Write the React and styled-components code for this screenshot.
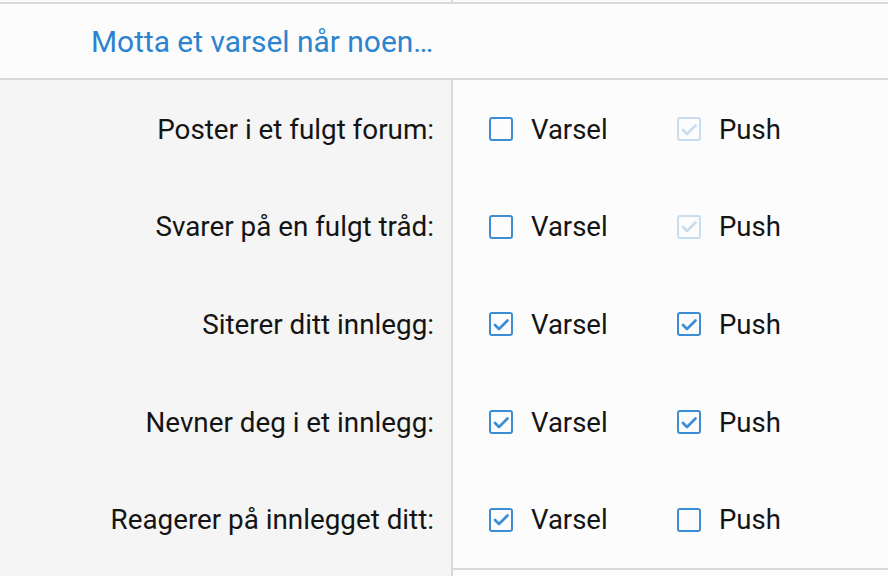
import React from "react";
import styled, { createGlobalStyle } from "styled-components";

const Global = createGlobalStyle`
  html, body { margin: 0; padding: 0; background: #fcfcfc; }
  body { font-family: Roboto, "Liberation Sans", Arial, sans-serif; color: #141414; }
`;

const Page = styled.div`
  width: 888px;
  height: 576px;
  overflow: hidden;
  background: #fcfcfc;
  display: flex;
  flex-direction: column;
`;

const PrevRow = styled.div`
  display: grid;
  grid-template-columns: 453px 1fr;
  height: 2px;
  border-bottom: 2px solid #d9d9d9;
`;

const PrevCell = styled.div`
  border-right: ${(p) => (p.$left ? "2px solid #d9d9d9" : "none")};
`;

const Header = styled.div`
  height: 74px;
  display: flex;
  align-items: center;
  padding-left: 91px;
  border-bottom: 2px solid #d9d9d9;
  color: #2c84cf;
  font-size: 29.9px;
`;

const Body = styled.div`
  display: grid;
  grid-template-columns: 453px 1fr;
  flex: 1;
`;

const LabelCol = styled.div`
  background: #f5f5f5;
  border-right: 2px solid #d9d9d9;
  display: flex;
  flex-direction: column;
`;

const ControlCol = styled.div`
  display: flex;
  flex-direction: column;
`;

const Rows = styled.div`
  height: 488px;
  display: flex;
  flex-direction: column;
  border-bottom: ${(p) => (p.$bordered ? "2px solid #d9d9d9" : "none")};
`;

const LabelRow = styled.div`
  flex: 1;
  display: flex;
  align-items: center;
  justify-content: flex-end;
  padding-right: 17px;
  padding-top: 1px;
  font-size: 27.8px;
`;

const ControlRow = styled.div`
  flex: 1;
  display: flex;
  align-items: center;
  padding-left: 36px;
  padding-top: 1px;
`;

const Option = styled.label`
  display: flex;
  align-items: center;
  gap: 18px;
  width: 188px;
  font-size: 27.5px;
`;

const Box = styled.span`
  box-sizing: border-box;
  width: 24px;
  height: 24px;
  border: 2.5px solid ${(p) => (p.$disabled ? "#c9ddf0" : "#3d8dd5")};
  border-radius: 3px;
  display: flex;
  align-items: center;
  justify-content: center;
  background: #fcfcfc;
`;

function Check({ checked, disabled }) {
  return (
    <Box $disabled={disabled}>
      {checked && (
        <svg width="19" height="19" viewBox="0 0 19 19">
          <polyline
            points="3,10 7,14 15.5,5.5"
            fill="none"
            stroke={disabled ? "#c9ddf0" : "#3d8dd5"}
            strokeWidth="2.7"
            strokeLinecap="round"
            strokeLinejoin="round"
          />
        </svg>
      )}
    </Box>
  );
}

const rows = [
  { label: "Poster i et fulgt forum:", varsel: false, push: true, pushDisabled: true },
  { label: "Svarer på en fulgt tråd:", varsel: false, push: true, pushDisabled: true },
  { label: "Siterer ditt innlegg:", varsel: true, push: true },
  { label: "Nevner deg i et innlegg:", varsel: true, push: true },
  { label: "Reagerer på innlegget ditt:", varsel: true, push: false },
];

export default function App() {
  return (
    <Page>
      <Global />
      <PrevRow>
        <PrevCell $left />
        <PrevCell />
      </PrevRow>
      <Header>Motta et varsel når noen…</Header>
      <Body>
        <LabelCol>
          <Rows>
            {rows.map((r) => (
              <LabelRow key={r.label}>{r.label}</LabelRow>
            ))}
          </Rows>
        </LabelCol>
        <ControlCol>
          <Rows $bordered>
            {rows.map((r) => (
              <ControlRow key={r.label}>
                <Option>
                  <Check checked={r.varsel} />
                  Varsel
                </Option>
                <Option>
                  <Check checked={r.push} disabled={r.pushDisabled} />
                  Push
                </Option>
              </ControlRow>
            ))}
          </Rows>
        </ControlCol>
      </Body>
    </Page>
  );
}
